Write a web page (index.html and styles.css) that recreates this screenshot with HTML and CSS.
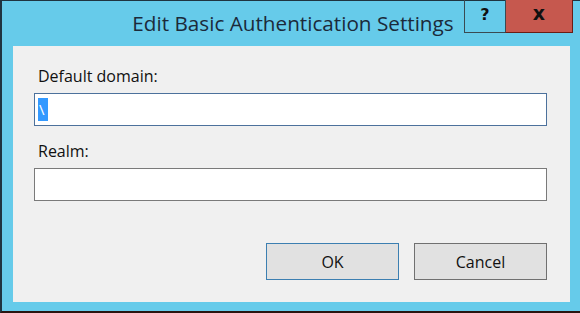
FILE: index.html
```html
<!DOCTYPE html>
<html lang="en">
<head>
  <meta charset="UTF-8" />
  <title>Edit Basic Authentication Settings</title>
  <link rel="stylesheet" href="styles.css">
</head>
<body>

  <div class="window">
    <!-- TITLE BAR -->
    <div class="titlebar">
      <div class="title">Edit Basic Authentication Settings</div>
      <div class="caption">
        <div class="cap-btn help">?</div>
        <div class="cap-btn close">x</div>
      </div>
    </div>

    <!-- CLIENT AREA -->
    <div class="client">
      <label class="field-label">Default domain:</label>
      <div class="textbox focused"><span class="sel">\</span></div>

      <label class="field-label">Realm:</label>
      <div class="textbox"></div>

      <div class="actions">
        <button class="btn default">OK</button>
        <button class="btn">Cancel</button>
      </div>
    </div>
  </div>

</body>
</html>
```

FILE: styles.css
```css
body {
  margin: 0;
  background: #66cbea;
  font-family: "Open Sans", "Noto Sans", sans-serif;
}
.window {
  width: 578px;
  height: 310px;
  background: #66cbea;
  border-left: 2px solid #1f3440;
  border-top: 1px solid #1f3440;
  border-bottom: 2px solid #2a1410;
}
.titlebar {
  height: 45px;
  display: grid;
}
.title,
.caption {
  grid-area: 1 / 1;
}
.title {
  justify-self: center;
  align-self: start;
  margin-top: 8px;
  padding-left: 4px;
  font-size: 20.7px;
  color: #1b2a3a;
}
.caption {
  justify-self: end;
  align-self: start;
  display: flex;
  margin-right: 7px;
  margin-top: -1px;
}
.cap-btn {
  height: 33px;
  box-sizing: border-box;
  display: flex;
  align-items: center;
  justify-content: center;
  font-family: "DejaVu Sans", sans-serif;
  font-weight: bold;
  color: #111;
}
.help {
  width: 41px;
  font-size: 16px;
  border-left: 1px solid #3a4a52;
  border-bottom: 1px solid #3a4a52;
  padding-bottom: 4px;
}
.close {
  width: 68px;
  font-size: 19px;
  background: #c6584e;
  border-left: 1px solid #3a4a52;
  border-right: 1px solid #6a1d14;
  border-bottom: 1px solid #6a1d14;
  padding-bottom: 6px;
}
.client {
  margin-left: 11px;
  width: 557px;
  height: 256px;
  box-sizing: border-box;
  background: #f0f0f0;
  padding: 20px 23px 0 21px;
  display: flex;
  flex-direction: column;
}
.field-label {
  margin-left: 4px;
  font-size: 16px;
  line-height: 20px;
  color: #111;
  margin-bottom: 7px;
}
.textbox {
  height: 33px;
  box-sizing: border-box;
  background: #fff;
  border: 1px solid #7a7a7a;
  margin-bottom: 15px;
  display: flex;
  align-items: center;
  padding-left: 3px;
}
.focused {
  border-color: #4c719c;
}
.sel {
  background: #3399ff;
  color: #fff;
  font-size: 15px;
  line-height: 23px;
  padding: 0 3px 0 1px;
}
.actions {
  margin-top: 27px;
  display: flex;
  justify-content: flex-end;
  gap: 15px;
}
.btn {
  width: 133px;
  height: 37px;
  background: #e1e1e1;
  border: 1px solid #707070;
  font-family: "Open Sans", "Noto Sans", sans-serif;
  font-size: 16px;
  color: #111;
  padding: 0;
}
.btn.default {
  border-color: #3c7fb1;
}
```
